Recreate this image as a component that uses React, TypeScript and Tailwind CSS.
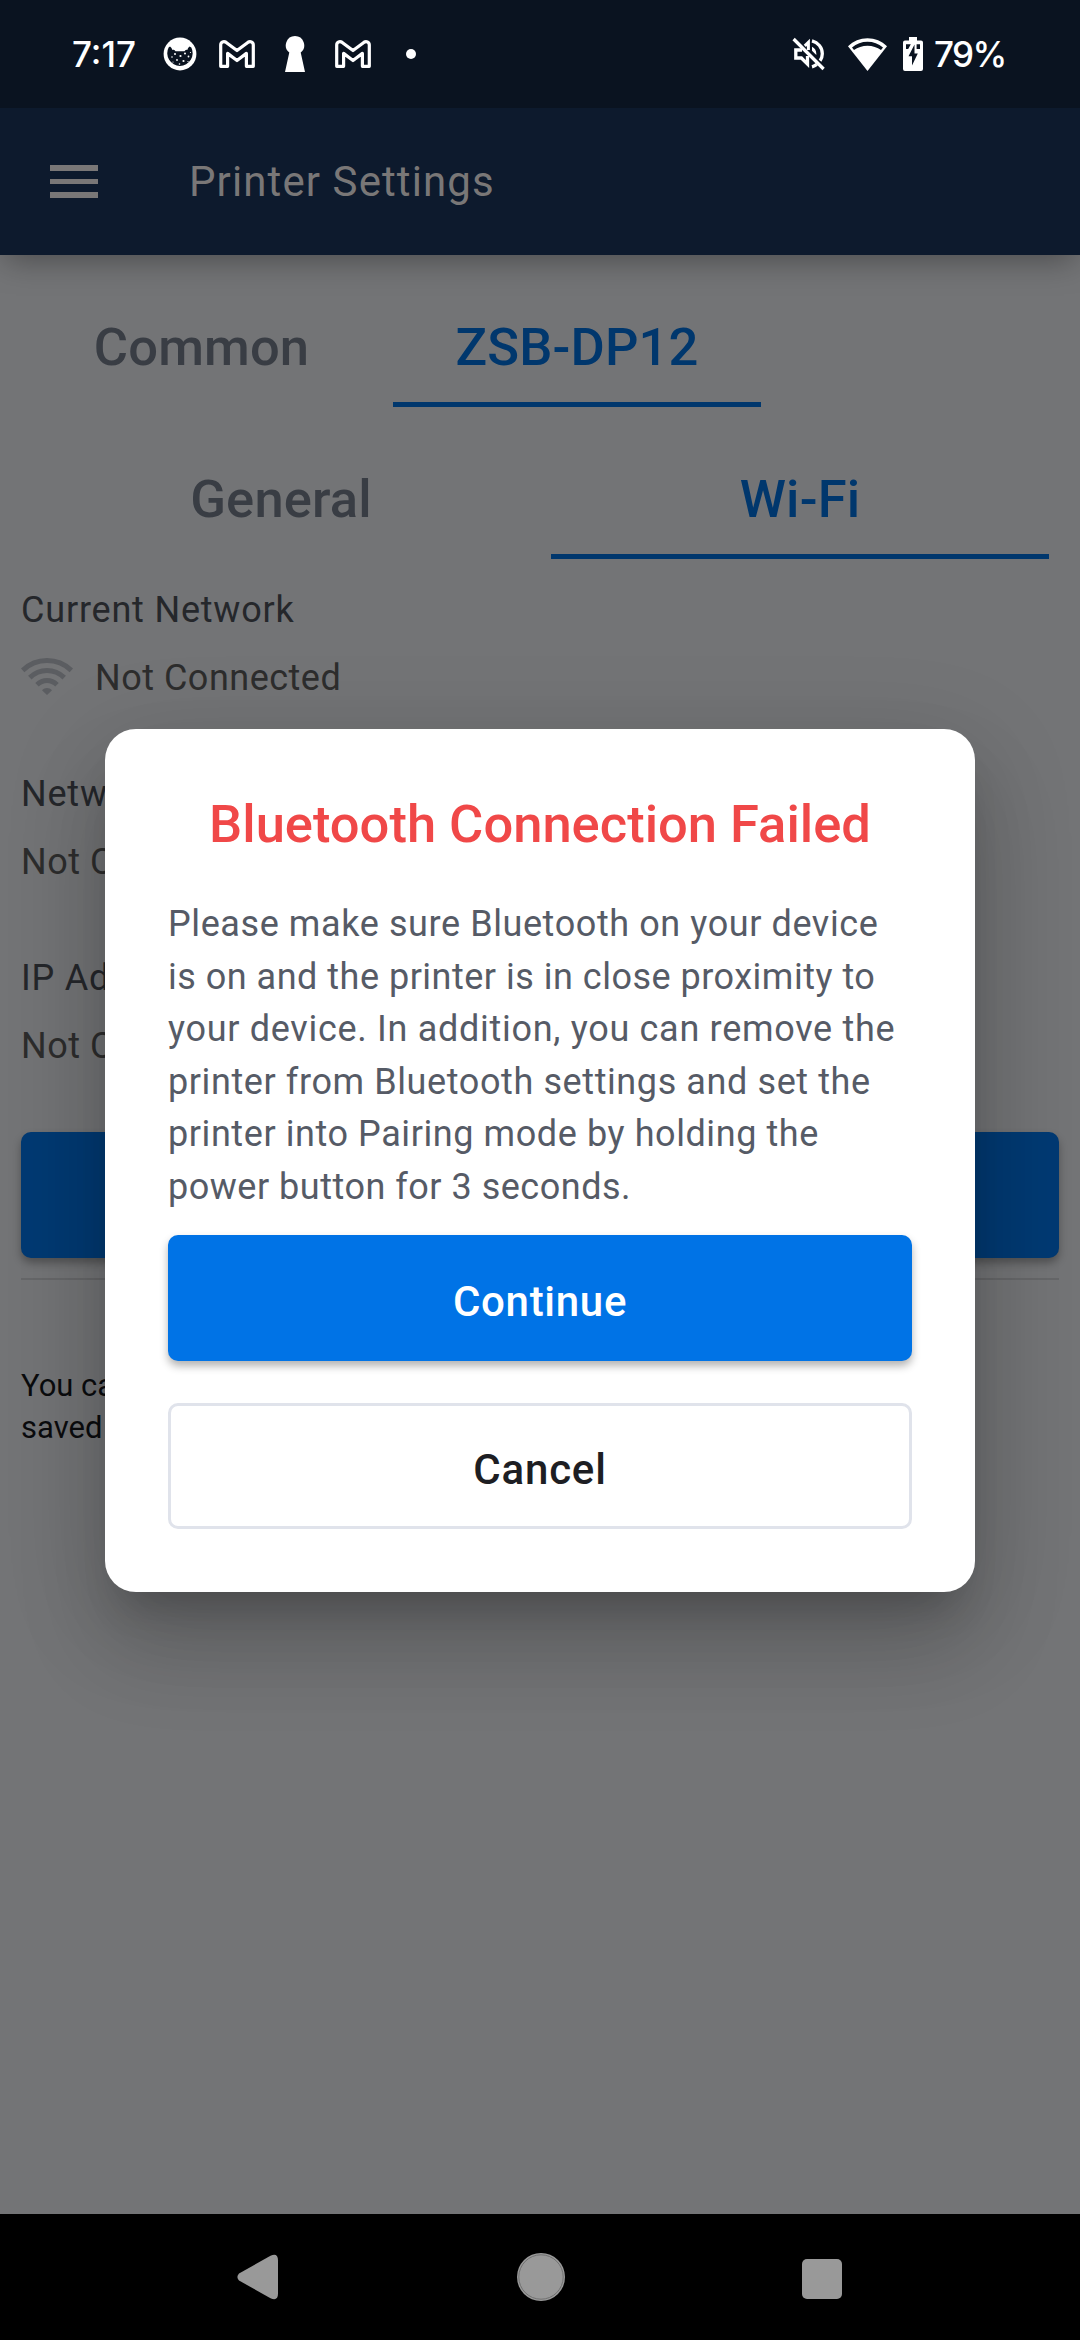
function CatIcon() {
  return (
    <svg className="h-[34px] w-[34px]" viewBox="0 0 34 34">
      <circle cx="17" cy="17" r="16.4" fill="#fff" />
      <path
        d="M5.600 10.500 7 9.500c1.200.8 2 2 2.300 3.400 1.200-.2 2.400.2 3.200 1.400l9-.1c.8-1.100 1.800-1.500 2.900-1.300.3-1.300 1-2.600 2.200-3.400l1.700 1A12.700 12.700 0 1 1 5.600 10.500Z"
        fill="#0a1320"
      />
      <g fill="#fff">
        <circle cx="12" cy="17" r="1" />
        <circle cx="17.500" cy="19" r="1.100" />
        <circle cx="22" cy="16.500" r="1" />
        <circle cx="9" cy="20" r=".8" />
        <circle cx="25.500" cy="19.500" r=".9" />
        <circle cx="14" cy="23" r=".9" />
        <circle cx="20.500" cy="24" r="1.100" />
        <circle cx="16.500" cy="27" r=".8" />
        <circle cx="25" cy="24.500" r=".6" />
        <circle cx="10" cy="25" r=".6" />
        <circle cx="27.500" cy="15.500" r=".6" />
      </g>
    </svg>
  );
}

function MailIcon() {
  return (
    <svg className="h-[28px] w-[36px]" viewBox="0 0 36 28" fill="none" stroke="#fff" strokeWidth="3.200" strokeLinejoin="round">
      <path d="M1.700 26.300V5C1.700 1.800 4.900.8 7.200 2.400L18 10.600 28.800 2.400C31.100.8 34.300 1.800 34.300 5v21.300h-6.900V13.400L18 20.500 8.600 13.400v12.900Z" />
    </svg>
  );
}

function KeyholeIcon() {
  return (
    <svg className="h-[36px] w-[20px]" viewBox="0 0 20 36" fill="#fff">
      <path d="M10 0a9.200 9.200 0 0 1 5.700 16.400L20 36H0L4.300 16.400A9.200 9.200 0 0 1 10 0Z" />
    </svg>
  );
}

function MutedIcon() {
  return (
    <svg className="h-[34px] w-[34px]" viewBox="0 0 34 34" fill="none" stroke="#fff" strokeWidth="3.300">
      <path d="M10 13H3.800v8h5.600l6.100 6.100V19" />
      <path d="M12.800 8.900l3.600-3.600v7.600" strokeWidth="3" />
      <path d="M20 3.800c6 1.600 10.300 6.600 10.300 13 0 2.600-.8 5-2.200 7M20 29.800c1.800-.5 3.400-1.300 4.800-2.400" />
      <path d="M20 9.800c2.800 1.400 4.300 3.900 4.300 6.700v1.500L20 13.800Z" fill="#fff" stroke="none" />
      <path d="M1.600 2 31.600 32" strokeWidth="3.200" />
    </svg>
  );
}

function WifiStatusIcon() {
  return (
    <svg className="h-[33px] w-[39px]" viewBox="0 0 39 33">
      <path d="M0 8.300C5.300 3.200 12 .3 19.500.3S33.700 3.200 39 8.300L19.500 33Z" fill="#fff" />
      <path d="M4 9.400C8.500 5.700 13.700 3.800 19.500 3.800S30.500 5.700 35 9.400l-2 2.700C29.300 9.400 24.600 7.700 19.500 7.700S9.700 9.400 6 12.100Z" fill="#0a1320" />
    </svg>
  );
}

function BatteryIcon() {
  return (
    <svg className="h-[34px] w-[20px]" viewBox="0 0 20 34">
      <path d="M6 0h8v3.400h4A2 2 0 0 1 20 5.400V32a2 2 0 0 1-2 2H2a2 2 0 0 1-2-2V5.400a2 2 0 0 1 2-2h4Z" fill="#fff" />
      <path d="M11.500 7.500 5.500 19.300H9v9.200L14.800 16.500H11.500Z" fill="#0a1320" />
      <path d="M3 7.200h4.800L5.200 12H3ZM13.600 7.200H17V12h-3.400Z" fill="#0a1320" />
    </svg>
  );
}

function WifiSignalIcon() {
  return (
    <svg className="h-[37px] w-[52px]" viewBox="0 0 52 37" fill="none" stroke="#5b5d61" strokeWidth="5">
      <path d="M1.700 12.300C8.500 6 16.800 2.600 26 2.600s17.500 3.400 24.300 9.700" />
      <path d="M8.800 19.600C13.600 15 19.500 12.500 26 12.500s12.400 2.500 17.200 7.100" />
      <path d="M16 26.800c2.800-2.700 6.200-4.200 10-4.200s7.200 1.500 10 4.200" />
      <path d="M21 32.200c3-3 7-3 10 0l-5 4.800Z" fill="#5b5d61" stroke="none" />
    </svg>
  );
}

function StatusBar() {
  return (
    <div className="relative z-10 flex h-[108px] items-center justify-between bg-[#0a1320] pl-[72px] pr-[75px] text-white">
      <div className="flex items-center">
        <span className="w-[91px] font-['Inter'] text-[35px] leading-[40px] font-medium">7:17</span>
        <CatIcon />
        <span className="ml-[22px] flex items-center">
          <MailIcon />
        </span>
        <span className="ml-[30px] flex items-center">
          <KeyholeIcon />
        </span>
        <span className="ml-[30px] flex items-center">
          <MailIcon />
        </span>
        <span className="ml-[35px] h-[10px] w-[10px] rounded-full bg-white" />
      </div>
      <div className="flex items-center">
        <MutedIcon />
        <span className="ml-[22px] flex items-center">
          <WifiStatusIcon />
        </span>
        <span className="mr-[11px] ml-[16px] flex items-center">
          <BatteryIcon />
        </span>
        <span className="w-[71px] font-['Inter'] text-[35px] leading-[40px] font-medium tracking-[-1.600px]">79%</span>
      </div>
    </div>
  );
}

function AppBar() {
  return (
    <header className="relative flex h-[147px] items-center bg-[#0d1a2d] pl-[50px] shadow-[0_10px_30px_-5px_rgba(0,0,0,0.35)]">
      <div className="flex w-[48px] flex-col gap-[8px]">
        <span className="h-[5.500px] bg-[#797777]" />
        <span className="h-[5.500px] bg-[#797777]" />
        <span className="h-[5.500px] bg-[#797777]" />
      </div>
      <h1 className="ml-[91px] text-[42px] leading-[50px] tracking-[1.100px] text-[#797777]">Printer Settings</h1>
    </header>
  );
}

function Tab({ label, active, width }: { label: string; active?: boolean; width: string }) {
  return (
    <div
      className={`${width} border-b-[5px] pt-[60px] pb-[23px] text-center text-[52.500px] leading-[64px] font-medium tracking-[0.150px] ${
        active ? "border-[#00376d] text-[#00376d]" : "border-transparent text-[#393d44]"
      }`}
    >
      {label}
    </div>
  );
}

function Field({ label, value, icon }: { label: string; value: string; icon?: boolean }) {
  return (
    <div className="flex flex-col gap-[20px] text-[36px] leading-[48px]">
      <div className="tracking-[0.800px] text-[#25272b]">{label}</div>
      <div className="flex items-center tracking-[0.500px] text-[#2d2d2d]">
        {icon && (
          <span className="mr-[22px] -mt-[4px] flex">
            <WifiSignalIcon />
          </span>
        )}
        {value}
      </div>
    </div>
  );
}

const message: { text: string; spacing: string }[] = [
  { text: "Please make sure Bluetooth on your device", spacing: "tracking-[0.590px]" },
  { text: "is on and the printer is in close proximity to", spacing: "tracking-[0.500px]" },
  { text: "your device. In addition, you can remove the", spacing: "tracking-[0.700px]" },
  { text: "printer from Bluetooth settings and set the", spacing: "tracking-[0.600px]" },
  { text: "printer into Pairing mode by holding the", spacing: "tracking-[0.580px]" },
  { text: "power button for 3 seconds.", spacing: "tracking-[0.510px]" },
];

function Dialog() {
  return (
    <div
      role="dialog"
      className="absolute top-[729px] left-[105px] flex h-[863px] w-[870px] flex-col rounded-[31px] bg-white px-[63px] pt-[64px] shadow-[0_29px_39px_-18px_rgba(0,0,0,0.18),0_55px_90px_2px_rgba(0,0,0,0.14),0_24px_100px_8px_rgba(0,0,0,0.12)]"
    >
      <h2 className="text-center text-[52.500px] leading-[62px] font-medium whitespace-nowrap text-[#f04848]">
        Bluetooth Connection Failed
      </h2>
      <div className="mt-[43px] text-[36px] leading-[52.500px] text-[#565b66]">
        {message.map((line) => (
          <div key={line.text} className={`whitespace-nowrap ${line.spacing}`}>
            {line.text}
          </div>
        ))}
      </div>
      <button className="mt-[22px] h-[126px] shrink-0 rounded-[10px] bg-[#0073e6] pt-[7px] text-[42px] leading-[50px] font-medium tracking-[0.700px] text-white shadow-[0_5px_8px_rgba(0,0,0,0.3)]">
        Continue
      </button>
      <button className="mt-[42px] h-[126px] shrink-0 rounded-[10px] border-[3px] border-[#e0e3eb] bg-white pt-[7px] text-[42px] leading-[50px] font-medium tracking-[0.800px] text-[#1d1e23]">
        Cancel
      </button>
    </div>
  );
}

function NavBar() {
  return (
    <nav className="flex h-[126px] items-center justify-between bg-black pr-[238px] pl-[237px]">
      <svg className="h-[46px] w-[42px]" viewBox="0 0 42 46">
        <path d="M2 19.500 33.500 1.800Q41 -1.500 41 6.500V39.500Q41 47.500 33.500 44.200L2 26.500Q-1.200 23 2 19.500Z" fill="#999" />
      </svg>
      <svg className="h-[48px] w-[48px]" viewBox="0 0 48 48">
        <circle cx="24" cy="24" r="24" fill="#999" />
        <circle cx="24" cy="24" r="22.200" fill="none" stroke="#6c6c6c" strokeWidth=".9" />
      </svg>
      <span className="mt-[3px] h-[40px] w-[40px] rounded-[5px] bg-[#999]" />
    </nav>
  );
}

export default function App() {
  return (
    <div className="relative flex h-[2340px] w-[1080px] flex-col overflow-hidden bg-[#737476] font-['Roboto',sans-serif]">
      <StatusBar />
      <AppBar />
      <main className="flex-1">
        <div className="flex pl-[10px]">
          <Tab label="Common" width="w-[383px]" />
          <Tab label="ZSB-DP12" width="w-[368px]" active />
        </div>
        <div className="flex gap-[21px] pl-[32px]">
          <Tab label="General" width="w-[498px]" />
          <Tab label="Wi-Fi" width="w-[498px]" active />
        </div>
        <div className="px-[21px] pt-[27px]">
          <div className="flex flex-col gap-[68px]">
            <Field label="Current Network" value="Not Connected" icon />
            <Field label="Netw" value="Not C" />
            <Field label="IP Ad" value="Not C" />
          </div>
          <div className="mt-[62px] h-[126px] rounded-[10px] bg-[#003a73] shadow-[0_5px_8px_rgba(0,0,0,0.3)]" />
          <div className="mt-[20px] h-[2px] bg-[#666769]" />
          <p className="mt-[85px] text-[31px] leading-[42px] whitespace-nowrap text-[#0b0c0e]">
            You ca
            <br />
            saved
          </p>
        </div>
      </main>
      <NavBar />
      <Dialog />
    </div>
  );
}
